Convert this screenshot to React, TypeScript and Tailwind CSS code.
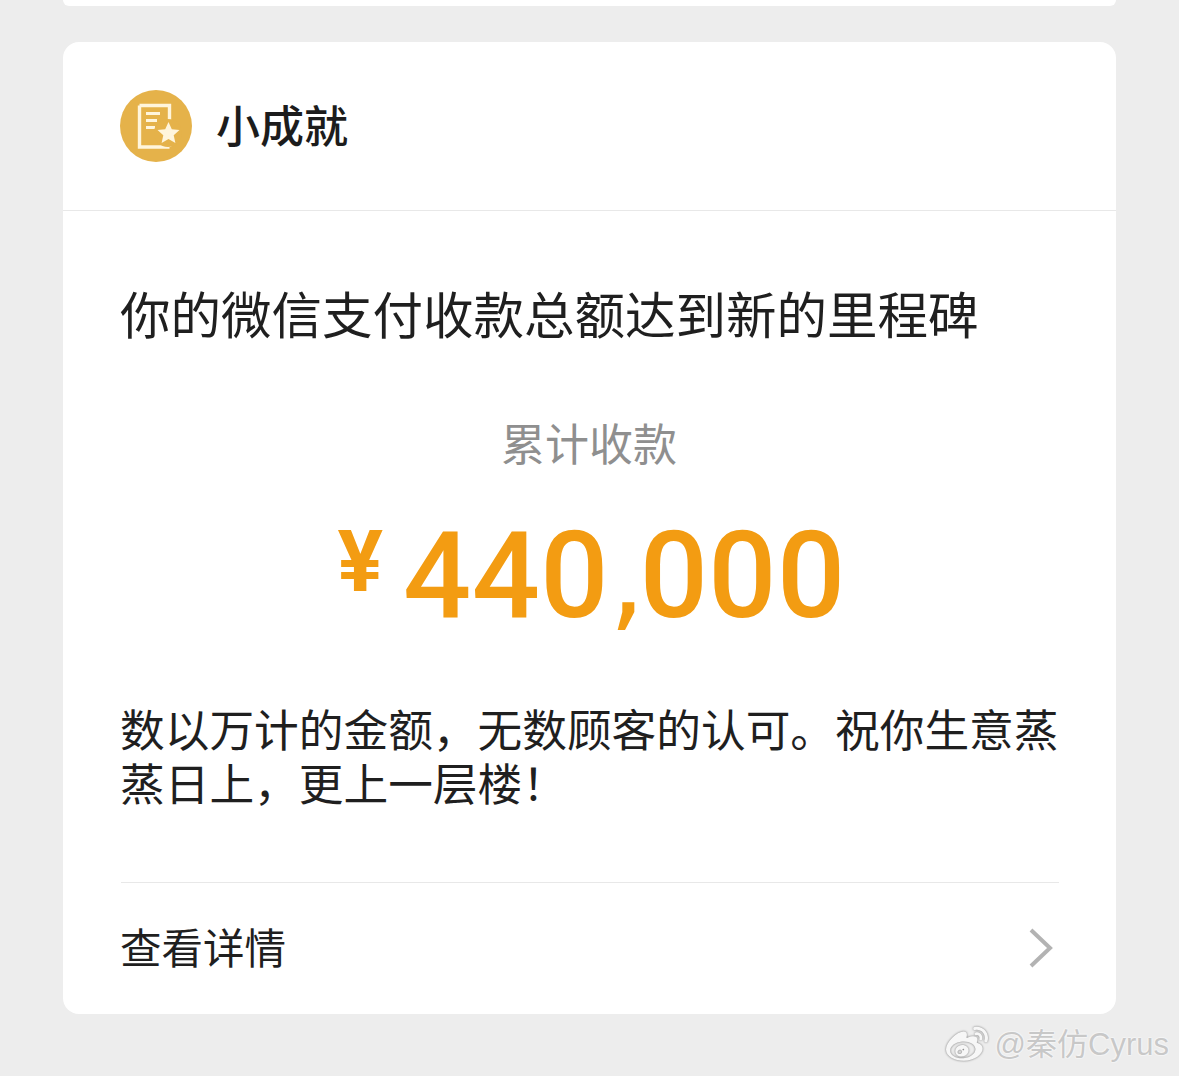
import { FaWeibo } from 'react-icons/fa'

const cjk = { fontFamily: '"Noto Sans CJK SC", "Noto Sans", sans-serif' }

// 成就徽章：文档加星标
const BadgeIcon = () => (
  <svg viewBox="0 0 72 72" className="h-[72px] w-[72px] shrink-0">
    <circle cx="36" cy="36" r="36" fill="#e5b24a" />
    <path d="M19.5 15.5h30v21M49.5 57h-30V15.5M49.5 52v5" fill="none" stroke="#fff5dc" strokeWidth="3.4" />
    <path d="M26 23.5h14M26 30.5h11M26 37.5h9" stroke="#fff5dc" strokeWidth="3.2" fill="none" />
    <circle cx="48" cy="43" r="14" fill="#e5b24a" />
    <path
      d="M48.5 32l3.3 7.2 7.7.8-5.8 5.2 1.7 7.7-6.9-4-6.9 4 1.7-7.7-5.8-5.2 7.7-.8z"
      fill="#fff5dc"
    />
  </svg>
)

export default function App() {
  return (
    <div className="relative h-[1076px] w-full overflow-hidden bg-[#ededed] px-[63px]" style={cjk}>
      <div className="h-[6px] rounded-b-2xl bg-white" />

      <div className="mt-[36px] h-[972px] rounded-2xl bg-white">
        <div className="flex h-[169px] items-center gap-[24px] border-b border-[#e8e8e8] pl-[57px]">
          <BadgeIcon />
          <span className="mb-[4px] text-[44px] font-medium leading-none text-[#1c1c1c]">小成就</span>
        </div>

        <div className="pl-[58px] pr-[57px]">
          <p className="-ml-[1px] mt-[71px] whitespace-nowrap text-[50.5px] leading-[60px] text-[#1f1f1f]">
            你的微信支付收款总额达到新的里程碑
          </p>

          <p className="mt-[70px] pr-[2px] text-center text-[44px] leading-[60px] text-[#8f8f8f]">累计收款</p>

          <div
            className="mt-[34px] flex h-[140px] items-center justify-center gap-[20px] pl-[3px] text-[#f39c12]"
            style={{ fontFamily: 'Roboto, sans-serif' }}
          >
            <span className="mb-[28px] text-[85px] font-bold leading-none">¥</span>
            <span className="whitespace-nowrap text-[120px] font-medium leading-none tracking-[0.4px]">
              440
              <span className="tracking-[-6px]" style={{ fontFamily: '"DejaVu Sans", sans-serif', fontSize: 116, fontWeight: 400 }}>
                ,
              </span>
              000
            </span>
          </div>

          <p className="-ml-[1px] mt-[55px] w-[945px] text-[44.7px] leading-[54px] text-[#1f1f1f]">
            数以万计的金额，无数顾客的认可。祝你生意蒸蒸日上，更上一层楼！
          </p>

          <div className="mt-[73px] flex h-[127px] items-center justify-between border-t border-[#e8e8e8] pr-[5px]">
            <span className="-ml-[1px] mt-[2px] text-[41.5px] leading-none text-[#1f1f1f]">查看详情</span>
            <svg viewBox="0 0 26 42" className="mt-[4px] h-[42px] w-[26px]">
              <path d="M3 3l19 18L3 39" fill="none" stroke="#b3b3b3" strokeWidth="4" />
            </svg>
          </div>
        </div>
      </div>

      {/* 水印 */}
      <div
        className="absolute bottom-[10px] right-[10px] flex items-center gap-[5px] text-[31px] leading-none text-[#c8c8c8]"
        style={{ fontFamily: '"Liberation Sans", "Noto Sans CJK SC", sans-serif', textShadow: '0 0 2px #fff, 0 0 2px #fff' }}
      >
        <FaWeibo className="h-[42px] w-[46px] text-[#f7f7f7] drop-shadow-[0_0_1px_#777]" />
        <span className="mb-[2px]">@秦仿Cyrus</span>
      </div>
    </div>
  )
}
